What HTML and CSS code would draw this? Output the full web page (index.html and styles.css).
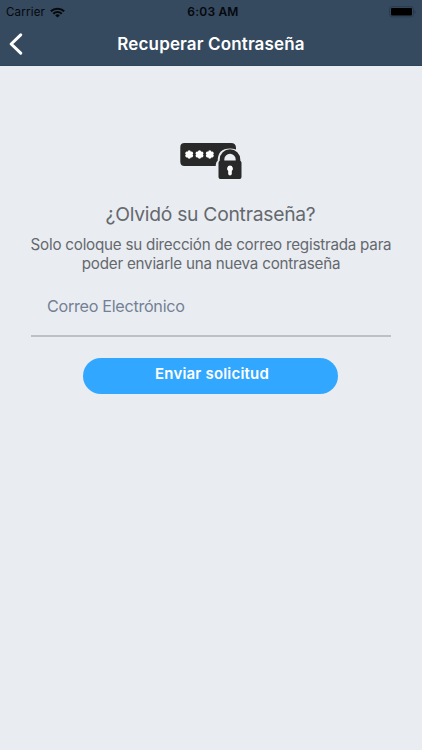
FILE: index.html
```html
<!DOCTYPE html>
<html lang="es">
<head>
<meta charset="utf-8">
<meta name="viewport" content="width=device-width, initial-scale=1">
<title>Recuperar Contraseña</title>
<link rel="stylesheet" href="styles.css">
</head>
<body>
<header class="header">
  <div class="status">
    <div class="carrier"><span>Carrier</span>
      <svg class="wifi" width="15" height="11" viewBox="0 0 14 11" preserveAspectRatio="none" fill="none" stroke="#05080c" stroke-width="2"><path d="M.8 4.2a8.8 8.8 0 0 1 12.4 0M3.1 6.7a5.5 5.5 0 0 1 7.8 0"/><path d="M7 10.6 4.9 8.4a3 3 0 0 1 4.2 0Z" fill="#05080c" stroke="none"/></svg>
    </div>
    <time class="time">6:03 AM</time>
    <svg class="battery" width="27" height="12" viewBox="0 0 27 12"><rect x=".5" y=".7" width="24" height="10.2" rx="2.6" fill="none" stroke="#2a3b4e"/><rect x="2" y="2" width="21" height="7.600" rx="1" fill="#000"/><path d="M25.500 4.200c1.600.6 1.600 3 0 3.600Z" fill="#2a3b4e"/></svg>
  </div>
  <div class="nav">
    <svg class="back" width="15" height="22" viewBox="0 0 15 22" fill="none" stroke="#fff" stroke-width="3" stroke-linecap="round" stroke-linejoin="round"><path d="M12.700 1.800 3.200 11l9.500 9.200"/></svg>
    <h1 class="title">Recuperar Contraseña</h1>
    <span></span>
  </div>
</header>
<main class="content">
  <svg class="lock" width="62" height="38" viewBox="0 0 62 38">
    <defs><path id="star" d="M0-2.600V2.600M-2.300-1.300 2.300 1.300M-2.300 1.300 2.300-1.300" stroke="#fff" stroke-width="3.300" stroke-linecap="round"/></defs>
    <path d="M4.500 1H51q5 0 5 5v1.400q-3-.9-6-.9-12.300 0-12.300 12.300-1.800 1.100-2 5.200H4.500Q.3 24 .3 19.800V5.200Q.3 1 4.500 1Z" fill="#282928"/>
    <use href="#star" x="9.200" y="12.500"/><use href="#star" x="19.500" y="12.500"/><use href="#star" x="29.800" y="12.500"/>
    <path d="M42 22v-4.500a8 8 0 0 1 16 0V22" fill="none" stroke="#282928" stroke-width="4.600"/>
    <rect x="38.500" y="18.500" width="23" height="18.500" rx="2.600" fill="#282928"/>
    <path d="M50 23.600a3.100 3.100 0 0 1 1.800 5.500v2.600a1.800 1.800 0 0 1-3.600 0v-2.600A3.100 3.100 0 0 1 50 23.600Z" fill="#fff"/>
  </svg>
  <h2 class="heading">¿Olvidó su Contraseña?</h2>
  <p class="copy">Solo coloque su dirección de correo registrada para<br>poder enviarle una nueva contraseña</p>
  <div class="field"><span class="label">Correo Electrónico</span></div>
  <button class="submit"><span>Enviar solicitud</span></button>
</main>
</body>
</html>
```
FILE: styles.css
```css
* { box-sizing: border-box; }
body { margin: 0; min-height: 750px; background: #e9edf2; font-family: Inter, "Liberation Sans", sans-serif; }
.header { height: 66px; background: #35495f; border-bottom: 1px solid #30445a; }
.status { height: 24px; padding: 0 6px; display: grid; grid-template-columns: 1fr auto 1fr; align-items: center; color: #05080c; font-size: 11.5px; }
.carrier { display: flex; align-items: center; gap: 5px; letter-spacing: .2px; }
.time { margin-left: 4px; font-weight: 600; font-size: 12px; line-height: 14px; letter-spacing: .2px; }
.battery { justify-self: end; }
.nav { height: 40px; padding: 0 8px; display: grid; grid-template-columns: 1fr auto 1fr; align-items: center; }
.title { margin: 0; font-size: 17px; font-weight: 600; line-height: 22px; letter-spacing: .14px; color: #fff; }
.content { display: flex; flex-direction: column; align-items: center; padding: 76px 31px 0; }
.heading { margin: 22px 1px 0 0; font-size: 19.3px; line-height: 24px; letter-spacing: -.26px; font-weight: 400; color: #65686d; white-space: nowrap; }
.copy { margin: 10px 0 0; font-size: 15.2px; line-height: 18.5px; letter-spacing: -.23px; text-align: center; color: #65686d; white-space: nowrap; }
.field { width: 360px; height: 53px; margin-top: 11px; padding: 11px 16px; border-bottom: 2px solid #bcc1c9; font-size: 16.2px; line-height: 22px; letter-spacing: -.3px; color: #748094; }
.submit { width: 255px; height: 36px; margin: 21px 1px 0 0; padding: 0 0 4px 3px; border: 0; border-radius: 18px; background: #32a7ff; color: #fff; font: 600 15px/20px Inter, "Liberation Sans", sans-serif; letter-spacing: .2px; }
```
